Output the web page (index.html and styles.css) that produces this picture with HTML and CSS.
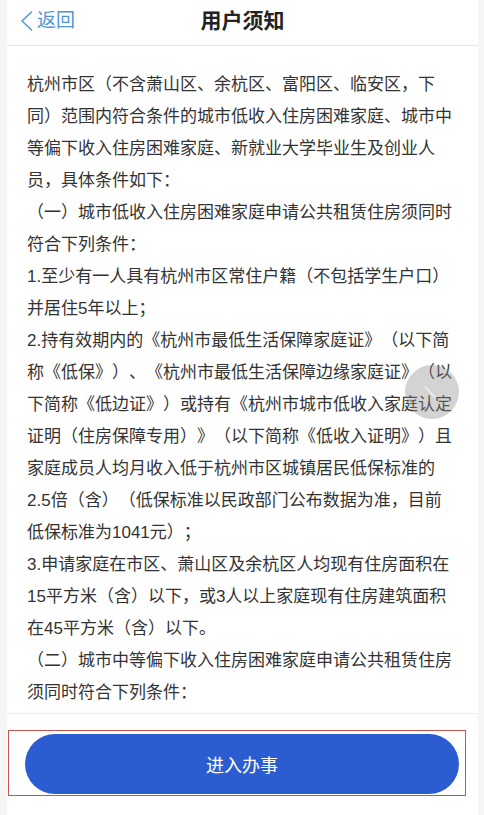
FILE: index.html
```html
<!DOCTYPE html>
<html lang="zh-CN">
<head>
<meta charset="utf-8">
<title>用户须知</title>
<link rel="stylesheet" href="styles.css">
</head>
<body>
<div class="page">
  <header class="topbar">
    <a class="back" href="#">
      <svg class="chev" width="13" height="20" viewBox="0 0 13 20"><path d="M11.5 1 L2 10 L11.5 19" fill="none" stroke="currentColor" stroke-width="1.5" stroke-linecap="round" stroke-linejoin="round"/></svg>
      <span>返回</span>
    </a>
    <h1 class="title">用户须知</h1>
  </header>
  <main class="content">
    <div class="text">
      <p>杭州市区（不含萧山区、余杭区、富阳区、临安区，下同）范围内符合条件的城市低收入住房困难家庭、城市中等偏下收入住房困难家庭、新就业大学毕业生及创业人员，具体条件如下：</p>
      <p>（一）城市低收入住房困难家庭申请公共租赁住房须同时符合下列条件：</p>
      <p>1.至少有一人具有杭州市区常住户籍（不包括学生户口）并居住5年以上；</p>
      <p>2.持有效期内的《杭州市最低生活保障家庭证》（以下简称《低保》）、《杭州市最低生活保障边缘家庭证》（以下简称《低边证》）或持有《杭州市城市低收入家庭认定证明（住房保障专用）》（以下简称《低收入证明》）且家庭成员人均月收入低于杭州市区城镇居民低保标准的2.5倍（含）（低保标准以民政部门公布数据为准，目前低保标准为1041元）；</p>
      <p>3.申请家庭在市区、萧山区及余杭区人均现有住房面积在15平方米（含）以下，或3人以上家庭现有住房建筑面积在45平方米（含）以下。</p>
      <p>（二）城市中等偏下收入住房困难家庭申请公共租赁住房须同时符合下列条件：</p>
    </div>
    <div class="float-ball"><span class="ball-mark"></span></div>
  </main>
  <footer class="footer">
    <div class="highlight">
      <button class="enter" type="button">进入办事</button>
    </div>
  </footer>
</div>
</body>
</html>
```
FILE: styles.css
```css
html, body {
  margin: 0;
  padding: 0;
}
body {
  background: #f5f5f5;
  font-family: "Liberation Sans", "Noto Sans CJK SC", sans-serif;
  color: #333;
  text-spacing-trim: space-all;
}
.page {
  margin: 0 6px 0 7px;
  width: 471px;
  height: 815px;
  background: #fff;
  display: flex;
  flex-direction: column;
}
.topbar {
  border-bottom: 1px solid #e6e6e6;
  position: relative;
  display: flex;
  align-items: center;
  justify-content: center;
  padding-bottom: 4px;
  box-sizing: content-box;
  height: 41px;
}
.back {
  position: absolute;
  left: 13px;
  top: 10px;
  display: flex;
  align-items: center;
  gap: 4px;
  color: #4f96d2;
  text-decoration: none;
  font-size: 19px;
  line-height: 21px;
}
.chev {
  display: block;
}
.title {
  margin: 0;
  font-size: 21px;
  font-weight: 700;
  color: #222;
  line-height: 24px;
}
.content {
  height: 667px;
  overflow: hidden;
  position: relative;
  box-sizing: border-box;
  padding: 23px 23px 0 20px;
}
.text {
  width: 428px;
  font-size: 17px;
  line-height: 32px;
}
.text p {
  margin: 0;
}
.float-ball {
  position: absolute;
  left: 398px;
  top: 319px;
  width: 54px;
  height: 54px;
  border-radius: 50%;
  background: rgba(140, 140, 140, 0.38);
}
.ball-mark {
  position: absolute;
  left: 24px;
  top: 20px;
  width: 2px;
  height: 14px;
  background: rgba(255, 255, 255, 0.55);
  transform: rotate(-45deg);
}
.footer {
  flex: 1;
  border-top: 1px solid #eeeeee;
  padding: 16px 0 0 1px;
}
.highlight {
  width: 458px;
  box-sizing: border-box;
  border: 1px solid #c4554b;
  padding: 3px 6px 1px 16px;
}
.enter {
  display: block;
  width: 434px;
  height: 60px;
  border: none;
  border-radius: 30px;
  background: #2b5dd1;
  color: #fff;
  font-family: "Liberation Sans", "Noto Sans CJK SC", sans-serif;
  font-size: 18px;
  padding: 0;
}
```
